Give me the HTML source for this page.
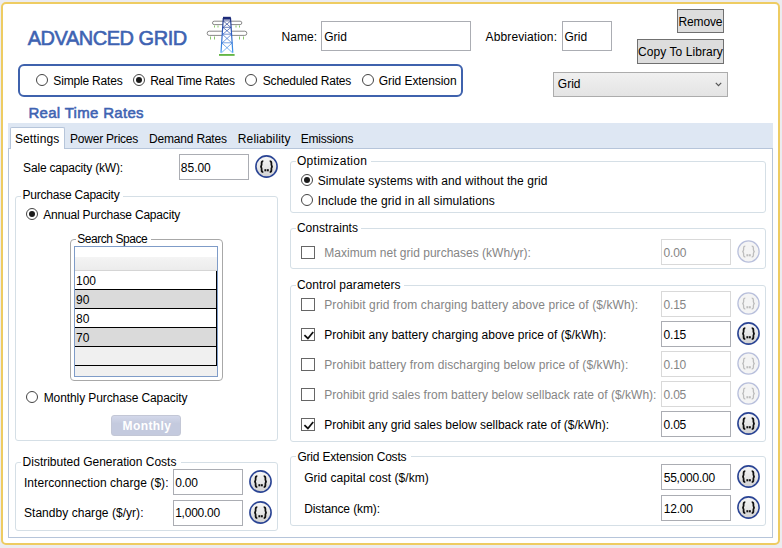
<!DOCTYPE html>
<html><head><meta charset="utf-8"><style>
html,body{margin:0;padding:0;width:782px;height:548px;overflow:hidden;background:#ececf0}
.t{position:absolute;font-family:"Liberation Sans", sans-serif;white-space:pre}
.cb{position:absolute;width:23px;height:23px}
.cb svg{position:absolute;left:0;top:0}
.cb .ci{fill:url(#cg);stroke:#2a4494;stroke-width:1.6}
.cb .br{fill:none;stroke:#111;stroke-width:1.75}
.cb .dt{fill:#111}
.cb.dis .ci{fill:#f4f4f4;stroke:#b9c0dc;stroke-width:1.3}
.cb.dis .br{stroke:#bdbdbd;stroke-width:1.3}
.cb.dis .dt{fill:#bdbdbd}
.rd{position:absolute;width:12px;height:12px;box-sizing:border-box;border:1px solid #444;border-radius:50%;background:#fff}
.rd i{position:absolute;left:2px;top:2px;width:6px;height:6px;border-radius:50%;background:#1a1a1a}
.ck{position:absolute;width:14px;height:13px;box-sizing:border-box;border:1px solid #666;background:#fff}
.ck svg{position:absolute;left:-1px;top:-1px}
</style></head><body>
<svg width="0" height="0" style="position:absolute"><defs><linearGradient id="cg" x1="0" y1="0" x2="0" y2="1"><stop offset="0" stop-color="#f7f7f7"/><stop offset="0.55" stop-color="#e6e6e6"/><stop offset="1" stop-color="#d0d0d0"/></linearGradient></defs></svg>
<div style="position:absolute;left:1px;top:2px;width:779px;height:543px;box-sizing:border-box;border:2px solid #eecc62;border-radius:5px;background:#fff"></div>
<div style="position:absolute;left:321px;top:21px;width:150px;height:30px;box-sizing:border-box;border:1px solid #abadb3;background:#fff"></div>
<div style="position:absolute;left:562px;top:21px;width:50px;height:30px;box-sizing:border-box;border:1px solid #abadb3;background:#fff"></div>
<div style="position:absolute;left:677px;top:9px;width:47px;height:24px;box-sizing:border-box;border:1px solid #707070;background:#dddddd"></div>
<div style="position:absolute;left:637px;top:39px;width:87px;height:25px;box-sizing:border-box;border:1px solid #707070;background:#dddddd"></div>
<div style="position:absolute;left:553px;top:72px;width:175px;height:25px;box-sizing:border-box;border:1px solid #acacac;background:linear-gradient(#f0f0f0,#e4e4e4)"></div>
<svg style="position:absolute;left:715px;top:81.5px" width="7" height="5" viewBox="0 0 7 5"><path d="M0.8 0.8 L3.5 3.6 L6.2 0.8" fill="none" stroke="#555" stroke-width="1.2"/></svg>
<div style="position:absolute;left:18px;top:64px;width:445px;height:33px;box-sizing:border-box;border:2px solid #3f62ad;border-radius:6px"></div>
<div class="rd" style="left:35.7px;top:74.0px"></div>
<div class="rd" style="left:132.9px;top:74.0px"><i></i></div>
<div class="rd" style="left:244.9px;top:74.0px"></div>
<div class="rd" style="left:362.1px;top:74.0px"></div>
<div style="position:absolute;left:8px;top:123px;width:765px;height:25px;box-sizing:border-box;background:#dee7f3"></div>
<div style="position:absolute;left:8px;top:148px;width:765px;height:390px;box-sizing:border-box;border:1px solid #b6c5da;background:#fff"></div>
<div style="position:absolute;left:10px;top:127px;width:55px;height:22px;box-sizing:border-box;border:1px solid #b6c5da;border-bottom:none;border-radius:2px 2px 0 0;background:#fff"></div>
<div style="position:absolute;left:179px;top:154px;width:70px;height:26px;box-sizing:border-box;border:1px solid #abadb3;background:#fff"></div>
<div class="cb" style="left:254.8px;top:155.0px"><svg width="23" height="23" viewBox="0 0 23 23"><circle class="ci" cx="11.5" cy="11.5" r="10.6"/><path class="br" d="M8.3 6.2 Q6.6 6.2 6.6 7.9 V9.8 Q6.6 11.5 5.2 11.6 Q6.6 11.7 6.6 13.4 V15.3 Q6.6 17 8.3 17 M14.7 6.2 Q16.4 6.2 16.4 7.9 V9.8 Q16.4 11.5 17.8 11.6 Q16.4 11.7 16.4 13.4 V15.3 Q16.4 17 14.7 17"/><rect class="dt" x="9.4" y="14.2" width="1.9" height="2.1"/><rect class="dt" x="11.9" y="14.2" width="1.9" height="2.1"/></svg></div>
<div style="position:absolute;left:15px;top:196px;width:263px;height:245px;box-sizing:border-box;border:1px solid #d5dfe6;border-radius:3px"></div>
<div style="position:absolute;left:21px;top:195px;width:102px;height:3px;background:#fff"></div>
<div class="rd" style="left:25.9px;top:208.4px"><i></i></div>
<div style="position:absolute;left:70px;top:239px;width:153px;height:142px;box-sizing:border-box;border:1px solid #a8a8a8;border-radius:4px"></div>
<div style="position:absolute;left:75.5px;top:238px;width:75.5px;height:3px;background:#fff"></div>
<div style="position:absolute;left:74px;top:246px;width:144px;height:131px;box-sizing:border-box;border:1px solid #7f9cc8;background:#f0f0f0"></div>
<div style="position:absolute;left:75px;top:247px;width:142px;height:10px;box-sizing:border-box;background:#fff"></div>
<div style="position:absolute;left:75px;top:257px;width:142px;height:13px;box-sizing:border-box;background:linear-gradient(#f4f4f4,#ececec)"></div>
<div style="position:absolute;left:75px;top:270px;width:142px;height:1px;box-sizing:border-box;background:#d5d5d5"></div>
<div style="position:absolute;left:75px;top:271px;width:141px;height:18px;box-sizing:border-box;background:#fff"></div>
<div style="position:absolute;left:75px;top:289px;width:142px;height:1px;box-sizing:border-box;background:#000"></div>
<div style="position:absolute;left:75px;top:290px;width:141px;height:18px;box-sizing:border-box;background:#dadada"></div>
<div style="position:absolute;left:75px;top:308px;width:142px;height:1px;box-sizing:border-box;background:#000"></div>
<div style="position:absolute;left:75px;top:309px;width:141px;height:18px;box-sizing:border-box;background:#fff"></div>
<div style="position:absolute;left:75px;top:327px;width:142px;height:1px;box-sizing:border-box;background:#000"></div>
<div style="position:absolute;left:75px;top:328px;width:141px;height:18px;box-sizing:border-box;background:#dadada"></div>
<div style="position:absolute;left:75px;top:346px;width:142px;height:1px;box-sizing:border-box;background:#000"></div>
<div style="position:absolute;left:75px;top:347px;width:141px;height:18px;box-sizing:border-box;background:#f0f0f0"></div>
<div style="position:absolute;left:75px;top:365px;width:142px;height:1px;box-sizing:border-box;background:#000"></div>
<div style="position:absolute;left:216px;top:271px;width:1px;height:95px;box-sizing:border-box;background:#000"></div>
<div class="rd" style="left:25.7px;top:391.1px"></div>
<div style="position:absolute;left:111px;top:415px;width:70px;height:21px;box-sizing:border-box;border:1px solid #c3c7d6;border-radius:3px;background:linear-gradient(#d3d8ea,#c4cade 40%,#c4cade)"></div>
<div style="position:absolute;left:15px;top:462px;width:263px;height:69px;box-sizing:border-box;border:1px solid #d5dfe6;border-radius:3px"></div>
<div style="position:absolute;left:21px;top:461px;width:160px;height:3px;background:#fff"></div>
<div style="position:absolute;left:173px;top:469px;width:70px;height:26px;box-sizing:border-box;border:1px solid #abadb3;background:#fff"></div>
<div class="cb" style="left:248.7px;top:469.8px"><svg width="23" height="23" viewBox="0 0 23 23"><circle class="ci" cx="11.5" cy="11.5" r="10.6"/><path class="br" d="M8.3 6.2 Q6.6 6.2 6.6 7.9 V9.8 Q6.6 11.5 5.2 11.6 Q6.6 11.7 6.6 13.4 V15.3 Q6.6 17 8.3 17 M14.7 6.2 Q16.4 6.2 16.4 7.9 V9.8 Q16.4 11.5 17.8 11.6 Q16.4 11.7 16.4 13.4 V15.3 Q16.4 17 14.7 17"/><rect class="dt" x="9.4" y="14.2" width="1.9" height="2.1"/><rect class="dt" x="11.9" y="14.2" width="1.9" height="2.1"/></svg></div>
<div style="position:absolute;left:173px;top:500px;width:70px;height:26px;box-sizing:border-box;border:1px solid #abadb3;background:#fff"></div>
<div class="cb" style="left:248.7px;top:500.9px"><svg width="23" height="23" viewBox="0 0 23 23"><circle class="ci" cx="11.5" cy="11.5" r="10.6"/><path class="br" d="M8.3 6.2 Q6.6 6.2 6.6 7.9 V9.8 Q6.6 11.5 5.2 11.6 Q6.6 11.7 6.6 13.4 V15.3 Q6.6 17 8.3 17 M14.7 6.2 Q16.4 6.2 16.4 7.9 V9.8 Q16.4 11.5 17.8 11.6 Q16.4 11.7 16.4 13.4 V15.3 Q16.4 17 14.7 17"/><rect class="dt" x="9.4" y="14.2" width="1.9" height="2.1"/><rect class="dt" x="11.9" y="14.2" width="1.9" height="2.1"/></svg></div>
<div style="position:absolute;left:290px;top:161px;width:476px;height:52px;box-sizing:border-box;border:1px solid #d5dfe6;border-radius:3px"></div>
<div style="position:absolute;left:296px;top:160px;width:75px;height:3px;background:#fff"></div>
<div class="rd" style="left:301.0px;top:174.0px"><i></i></div>
<div class="rd" style="left:301.0px;top:194.0px"></div>
<div style="position:absolute;left:290px;top:228px;width:476px;height:41px;box-sizing:border-box;border:1px solid #d5dfe6;border-radius:3px"></div>
<div style="position:absolute;left:296px;top:227px;width:65px;height:3px;background:#fff"></div>
<div class="ck" style="left:301px;top:246px"></div>
<div style="position:absolute;left:661px;top:239px;width:70px;height:26px;box-sizing:border-box;border:1px solid #d9d9d9;background:#fff"></div>
<div class="cb dis" style="left:737.0px;top:239.8px"><svg width="23" height="23" viewBox="0 0 23 23"><circle class="ci" cx="11.5" cy="11.5" r="10.6"/><path class="br" d="M8.3 6.2 Q6.6 6.2 6.6 7.9 V9.8 Q6.6 11.5 5.2 11.6 Q6.6 11.7 6.6 13.4 V15.3 Q6.6 17 8.3 17 M14.7 6.2 Q16.4 6.2 16.4 7.9 V9.8 Q16.4 11.5 17.8 11.6 Q16.4 11.7 16.4 13.4 V15.3 Q16.4 17 14.7 17"/><rect class="dt" x="9.4" y="14.2" width="1.9" height="2.1"/><rect class="dt" x="11.9" y="14.2" width="1.9" height="2.1"/></svg></div>
<div style="position:absolute;left:290px;top:285px;width:476px;height:157px;box-sizing:border-box;border:1px solid #d5dfe6;border-radius:3px"></div>
<div style="position:absolute;left:296px;top:284px;width:108px;height:3px;background:#fff"></div>
<div class="ck" style="left:301px;top:298px"></div>
<div style="position:absolute;left:661px;top:291px;width:70px;height:26px;box-sizing:border-box;border:1px solid #d9d9d9;background:#fff"></div>
<div class="cb dis" style="left:737.0px;top:292.3px"><svg width="23" height="23" viewBox="0 0 23 23"><circle class="ci" cx="11.5" cy="11.5" r="10.6"/><path class="br" d="M8.3 6.2 Q6.6 6.2 6.6 7.9 V9.8 Q6.6 11.5 5.2 11.6 Q6.6 11.7 6.6 13.4 V15.3 Q6.6 17 8.3 17 M14.7 6.2 Q16.4 6.2 16.4 7.9 V9.8 Q16.4 11.5 17.8 11.6 Q16.4 11.7 16.4 13.4 V15.3 Q16.4 17 14.7 17"/><rect class="dt" x="9.4" y="14.2" width="1.9" height="2.1"/><rect class="dt" x="11.9" y="14.2" width="1.9" height="2.1"/></svg></div>
<div class="ck" style="left:301px;top:328px"><svg width="14" height="13" viewBox="0 0 14 13"><path d="M3.4 7.2 L6.9 10.5 L12.2 4" fill="none" stroke="#111" stroke-width="1.8"/></svg></div>
<div style="position:absolute;left:661px;top:321px;width:70px;height:26px;box-sizing:border-box;border:1px solid #abadb3;background:#fff"></div>
<div class="cb" style="left:737.0px;top:322.3px"><svg width="23" height="23" viewBox="0 0 23 23"><circle class="ci" cx="11.5" cy="11.5" r="10.6"/><path class="br" d="M8.3 6.2 Q6.6 6.2 6.6 7.9 V9.8 Q6.6 11.5 5.2 11.6 Q6.6 11.7 6.6 13.4 V15.3 Q6.6 17 8.3 17 M14.7 6.2 Q16.4 6.2 16.4 7.9 V9.8 Q16.4 11.5 17.8 11.6 Q16.4 11.7 16.4 13.4 V15.3 Q16.4 17 14.7 17"/><rect class="dt" x="9.4" y="14.2" width="1.9" height="2.1"/><rect class="dt" x="11.9" y="14.2" width="1.9" height="2.1"/></svg></div>
<div class="ck" style="left:301px;top:358px"></div>
<div style="position:absolute;left:661px;top:351px;width:70px;height:26px;box-sizing:border-box;border:1px solid #d9d9d9;background:#fff"></div>
<div class="cb dis" style="left:737.0px;top:352.3px"><svg width="23" height="23" viewBox="0 0 23 23"><circle class="ci" cx="11.5" cy="11.5" r="10.6"/><path class="br" d="M8.3 6.2 Q6.6 6.2 6.6 7.9 V9.8 Q6.6 11.5 5.2 11.6 Q6.6 11.7 6.6 13.4 V15.3 Q6.6 17 8.3 17 M14.7 6.2 Q16.4 6.2 16.4 7.9 V9.8 Q16.4 11.5 17.8 11.6 Q16.4 11.7 16.4 13.4 V15.3 Q16.4 17 14.7 17"/><rect class="dt" x="9.4" y="14.2" width="1.9" height="2.1"/><rect class="dt" x="11.9" y="14.2" width="1.9" height="2.1"/></svg></div>
<div class="ck" style="left:301px;top:388px"></div>
<div style="position:absolute;left:661px;top:381px;width:70px;height:26px;box-sizing:border-box;border:1px solid #d9d9d9;background:#fff"></div>
<div class="cb dis" style="left:737.0px;top:382.3px"><svg width="23" height="23" viewBox="0 0 23 23"><circle class="ci" cx="11.5" cy="11.5" r="10.6"/><path class="br" d="M8.3 6.2 Q6.6 6.2 6.6 7.9 V9.8 Q6.6 11.5 5.2 11.6 Q6.6 11.7 6.6 13.4 V15.3 Q6.6 17 8.3 17 M14.7 6.2 Q16.4 6.2 16.4 7.9 V9.8 Q16.4 11.5 17.8 11.6 Q16.4 11.7 16.4 13.4 V15.3 Q16.4 17 14.7 17"/><rect class="dt" x="9.4" y="14.2" width="1.9" height="2.1"/><rect class="dt" x="11.9" y="14.2" width="1.9" height="2.1"/></svg></div>
<div class="ck" style="left:301px;top:418px"><svg width="14" height="13" viewBox="0 0 14 13"><path d="M3.4 7.2 L6.9 10.5 L12.2 4" fill="none" stroke="#111" stroke-width="1.8"/></svg></div>
<div style="position:absolute;left:661px;top:411px;width:70px;height:26px;box-sizing:border-box;border:1px solid #abadb3;background:#fff"></div>
<div class="cb" style="left:737.0px;top:412.3px"><svg width="23" height="23" viewBox="0 0 23 23"><circle class="ci" cx="11.5" cy="11.5" r="10.6"/><path class="br" d="M8.3 6.2 Q6.6 6.2 6.6 7.9 V9.8 Q6.6 11.5 5.2 11.6 Q6.6 11.7 6.6 13.4 V15.3 Q6.6 17 8.3 17 M14.7 6.2 Q16.4 6.2 16.4 7.9 V9.8 Q16.4 11.5 17.8 11.6 Q16.4 11.7 16.4 13.4 V15.3 Q16.4 17 14.7 17"/><rect class="dt" x="9.4" y="14.2" width="1.9" height="2.1"/><rect class="dt" x="11.9" y="14.2" width="1.9" height="2.1"/></svg></div>
<div style="position:absolute;left:290px;top:456px;width:476px;height:70px;box-sizing:border-box;border:1px solid #d5dfe6;border-radius:3px"></div>
<div style="position:absolute;left:296px;top:455px;width:115px;height:3px;background:#fff"></div>
<div style="position:absolute;left:661px;top:464px;width:70px;height:26px;box-sizing:border-box;border:1px solid #abadb3;background:#fff"></div>
<div class="cb" style="left:737.0px;top:465.1px"><svg width="23" height="23" viewBox="0 0 23 23"><circle class="ci" cx="11.5" cy="11.5" r="10.6"/><path class="br" d="M8.3 6.2 Q6.6 6.2 6.6 7.9 V9.8 Q6.6 11.5 5.2 11.6 Q6.6 11.7 6.6 13.4 V15.3 Q6.6 17 8.3 17 M14.7 6.2 Q16.4 6.2 16.4 7.9 V9.8 Q16.4 11.5 17.8 11.6 Q16.4 11.7 16.4 13.4 V15.3 Q16.4 17 14.7 17"/><rect class="dt" x="9.4" y="14.2" width="1.9" height="2.1"/><rect class="dt" x="11.9" y="14.2" width="1.9" height="2.1"/></svg></div>
<div style="position:absolute;left:661px;top:495px;width:70px;height:26px;box-sizing:border-box;border:1px solid #abadb3;background:#fff"></div>
<div class="cb" style="left:737.0px;top:496.3px"><svg width="23" height="23" viewBox="0 0 23 23"><circle class="ci" cx="11.5" cy="11.5" r="10.6"/><path class="br" d="M8.3 6.2 Q6.6 6.2 6.6 7.9 V9.8 Q6.6 11.5 5.2 11.6 Q6.6 11.7 6.6 13.4 V15.3 Q6.6 17 8.3 17 M14.7 6.2 Q16.4 6.2 16.4 7.9 V9.8 Q16.4 11.5 17.8 11.6 Q16.4 11.7 16.4 13.4 V15.3 Q16.4 17 14.7 17"/><rect class="dt" x="9.4" y="14.2" width="1.9" height="2.1"/><rect class="dt" x="11.9" y="14.2" width="1.9" height="2.1"/></svg></div>
<svg style="position:absolute;left:200px;top:10px" width="60" height="50" viewBox="0 0 60 50">
<defs><linearGradient id="tg" x1="0" y1="0" x2="0" y2="1"><stop offset="0" stop-color="#1c2f80"/><stop offset="0.45" stop-color="#2d5fc4"/><stop offset="1" stop-color="#3f9af0"/></linearGradient></defs>
<rect x="12.5" y="11.2" width="29.3" height="3.4" rx="1.7" fill="#fff" stroke="#7a7a7a" stroke-width="0.9"/>
<rect x="7.2" y="21.2" width="39.6" height="4.2" rx="2" fill="#fff" stroke="#7a7a7a" stroke-width="0.9"/>
<path d="M23.3 9 H30.5 L32.8 42.8 H21 Z" fill="#fff" stroke="none"/>
<path d="M23.3 8 L21 42.8 M30.5 8 L32.8 42.8" stroke="url(#tg)" stroke-width="1.2" fill="none"/>
<rect x="23" y="6.8" width="7.8" height="2.8" fill="#1c2a78"/>
<path d="M23.2 10.9 L30.7 17.3 M30.7 10.9 L23.2 17.3 M22.8 17.3 L31.1 24.2 M31.1 17.3 L22.8 24.2 M22.3 24.2 L31.7 32.8 M31.7 24.2 L22.3 32.8 M21.7 32.8 L32.3 42.6 M32.3 32.8 L21.7 42.6 M23.2 10.9 H30.7 M22.8 17.3 H31.1 M22.3 24.2 H31.7 M21.7 32.8 H32.3" stroke="url(#tg)" stroke-width="0.75" fill="none" opacity="0.9"/>
<rect x="19" y="44.2" width="15.6" height="1.5" fill="#3fa51a"/>
<path d="M14.5 15.5 v2 M18 15.5 v2 M36 15.5 v2 M39.5 15.5 v2 M10.5 26.5 v3 M14.5 26.5 v3 M39.5 26.5 v3 M43.5 26.5 v3" stroke="#7cc35a" stroke-width="0.9"/>
</svg>
<div class="t" style="left:27.7px;top:26.6px;font-size:20px;line-height:22px;color:#3e63b2;letter-spacing:-0.477px;-webkit-text-stroke:0.6px #3e63b2">ADVANCED GRID</div>
<div class="t" style="left:281.6px;top:30.3px;font-size:12px;line-height:14px;color:#000;letter-spacing:0.064px">Name:</div>
<div class="t" style="left:324.2px;top:30.3px;font-size:12px;line-height:14px;color:#000">Grid</div>
<div class="t" style="left:485.6px;top:30.2px;font-size:12px;line-height:14px;color:#000;letter-spacing:0.113px">Abbreviation:</div>
<div class="t" style="left:564.5px;top:30.2px;font-size:12px;line-height:14px;color:#000">Grid</div>
<div class="t" style="left:678.6px;top:14.8px;font-size:12px;line-height:14px;color:#000;letter-spacing:-0.178px">Remove</div>
<div class="t" style="left:638.0px;top:44.5px;font-size:12px;line-height:14px;color:#000;letter-spacing:0.069px">Copy To Library</div>
<div class="t" style="left:557.8px;top:77.0px;font-size:12px;line-height:14px;color:#000">Grid</div>
<div class="t" style="left:53.3px;top:73.7px;font-size:12px;line-height:14px;color:#000;letter-spacing:-0.17px">Simple Rates</div>
<div class="t" style="left:150.2px;top:73.7px;font-size:12px;line-height:14px;color:#000;letter-spacing:-0.279px">Real Time Rates</div>
<div class="t" style="left:262.8px;top:73.7px;font-size:12px;line-height:14px;color:#000;letter-spacing:-0.208px">Scheduled Rates</div>
<div class="t" style="left:378.8px;top:73.7px;font-size:12px;line-height:14px;color:#000;letter-spacing:-0.069px">Grid Extension</div>
<div class="t" style="left:28.4px;top:104.4px;font-size:15px;line-height:17px;color:#3e63b2;letter-spacing:0.309px;-webkit-text-stroke:0.55px #3e63b2">Real Time Rates</div>
<div class="t" style="left:14.9px;top:132.2px;font-size:12px;line-height:14px;color:#000;letter-spacing:0.149px">Settings</div>
<div class="t" style="left:70.1px;top:132.2px;font-size:12px;line-height:14px;color:#000;letter-spacing:-0.226px">Power Prices</div>
<div class="t" style="left:149.1px;top:132.2px;font-size:12px;line-height:14px;color:#000;letter-spacing:-0.195px">Demand Rates</div>
<div class="t" style="left:237.8px;top:132.2px;font-size:12px;line-height:14px;color:#000;letter-spacing:0.134px">Reliability</div>
<div class="t" style="left:300.8px;top:132.2px;font-size:12px;line-height:14px;color:#000;letter-spacing:-0.261px">Emissions</div>
<div class="t" style="left:23.1px;top:161.2px;font-size:12px;line-height:14px;color:#000;letter-spacing:-0.187px">Sale capacity (kW):</div>
<div class="t" style="left:180.8px;top:160.9px;font-size:12px;line-height:14px;color:#000;letter-spacing:-0.008px">85.00</div>
<div class="t" style="left:22.4px;top:187.8px;font-size:12px;line-height:14px;color:#000;letter-spacing:-0.214px">Purchase Capacity</div>
<div class="t" style="left:43.2px;top:207.9px;font-size:12px;line-height:14px;color:#000;letter-spacing:-0.188px">Annual Purchase Capacity</div>
<div class="t" style="left:77.2px;top:232.0px;font-size:12px;line-height:14px;color:#000;letter-spacing:-0.436px">Search Space</div>
<div class="t" style="left:76.0px;top:273.7px;font-size:12px;line-height:14px;color:#000">100</div>
<div class="t" style="left:76.0px;top:292.9px;font-size:12px;line-height:14px;color:#000">90</div>
<div class="t" style="left:76.0px;top:312.1px;font-size:12px;line-height:14px;color:#000">80</div>
<div class="t" style="left:76.0px;top:331.3px;font-size:12px;line-height:14px;color:#000">70</div>
<div class="t" style="left:43.7px;top:391.3px;font-size:12px;line-height:14px;color:#000;letter-spacing:-0.095px">Monthly Purchase Capacity</div>
<div class="t" style="left:122.6px;top:418.7px;font-size:12px;line-height:14px;color:#fff;font-weight:700;letter-spacing:0.383px">Monthly</div>
<div class="t" style="left:22.6px;top:455.0px;font-size:12px;line-height:14px;color:#000;letter-spacing:-0.01px">Distributed Generation Costs</div>
<div class="t" style="left:24.0px;top:475.9px;font-size:12px;line-height:14px;color:#000;letter-spacing:0.041px">Interconnection charge ($):</div>
<div class="t" style="left:175.2px;top:475.5px;font-size:12px;line-height:14px;color:#000;letter-spacing:-0.186px">0.00</div>
<div class="t" style="left:24.0px;top:505.8px;font-size:12px;line-height:14px;color:#000;letter-spacing:0.036px">Standby charge ($/yr):</div>
<div class="t" style="left:175.2px;top:506.1px;font-size:12px;line-height:14px;color:#000;letter-spacing:-0.246px">1,000.00</div>
<div class="t" style="left:296.9px;top:153.7px;font-size:12px;line-height:14px;color:#000;letter-spacing:0.3px">Optimization</div>
<div class="t" style="left:317.7px;top:174.0px;font-size:12px;line-height:14px;color:#000;letter-spacing:0.074px">Simulate systems with and without the grid</div>
<div class="t" style="left:317.7px;top:194.0px;font-size:12px;line-height:14px;color:#000;letter-spacing:0.105px">Include the grid in all simulations</div>
<div class="t" style="left:296.9px;top:221.0px;font-size:12px;line-height:14px;color:#000;letter-spacing:0.04px">Constraints</div>
<div class="t" style="left:324.3px;top:246.0px;font-size:12px;line-height:14px;color:#858585;letter-spacing:0.015px">Maximum net grid purchases (kWh/yr):</div>
<div class="t" style="left:663.6px;top:245.7px;font-size:12px;line-height:14px;color:#858585;letter-spacing:-0.186px">0.00</div>
<div class="t" style="left:296.9px;top:278.0px;font-size:12px;line-height:14px;color:#000;letter-spacing:0.058px">Control parameters</div>
<div class="t" style="left:324.2px;top:298.0px;font-size:12px;line-height:14px;color:#858585;letter-spacing:0.101px">Prohibit grid from charging battery above price of ($/kWh):</div>
<div class="t" style="left:663.6px;top:297.7px;font-size:12px;line-height:14px;color:#858585;letter-spacing:-0.22px">0.15</div>
<div class="t" style="left:324.2px;top:328.0px;font-size:12px;line-height:14px;color:#000;letter-spacing:0.04px">Prohibit any battery charging above price of ($/kWh):</div>
<div class="t" style="left:663.6px;top:327.7px;font-size:12px;line-height:14px;color:#000;letter-spacing:-0.22px">0.15</div>
<div class="t" style="left:324.2px;top:358.0px;font-size:12px;line-height:14px;color:#858585;letter-spacing:0.095px">Prohibit battery from discharging below price of ($/kWh):</div>
<div class="t" style="left:663.6px;top:357.7px;font-size:12px;line-height:14px;color:#858585;letter-spacing:-0.22px">0.10</div>
<div class="t" style="left:324.2px;top:388.0px;font-size:12px;line-height:14px;color:#858585;letter-spacing:0.034px">Prohibit grid sales from battery below sellback rate of ($/kWh):</div>
<div class="t" style="left:663.6px;top:387.7px;font-size:12px;line-height:14px;color:#858585;letter-spacing:-0.22px">0.05</div>
<div class="t" style="left:324.2px;top:418.0px;font-size:12px;line-height:14px;color:#000;letter-spacing:-0.011px">Prohibit any grid sales below sellback rate of ($/kWh):</div>
<div class="t" style="left:663.6px;top:417.7px;font-size:12px;line-height:14px;color:#000;letter-spacing:-0.22px">0.05</div>
<div class="t" style="left:297.4px;top:449.6px;font-size:12px;line-height:14px;color:#000;letter-spacing:-0.185px">Grid Extension Costs</div>
<div class="t" style="left:304.2px;top:470.9px;font-size:12px;line-height:14px;color:#000;letter-spacing:0.053px">Grid capital cost ($/km)</div>
<div class="t" style="left:663.8px;top:470.9px;font-size:12px;line-height:14px;color:#000;letter-spacing:-0.261px">55,000.00</div>
<div class="t" style="left:304.2px;top:502.2px;font-size:12px;line-height:14px;color:#000;letter-spacing:-0.119px">Distance (km):</div>
<div class="t" style="left:663.8px;top:501.9px;font-size:12px;line-height:14px;color:#000;letter-spacing:-0.208px">12.00</div>
</body></html>
